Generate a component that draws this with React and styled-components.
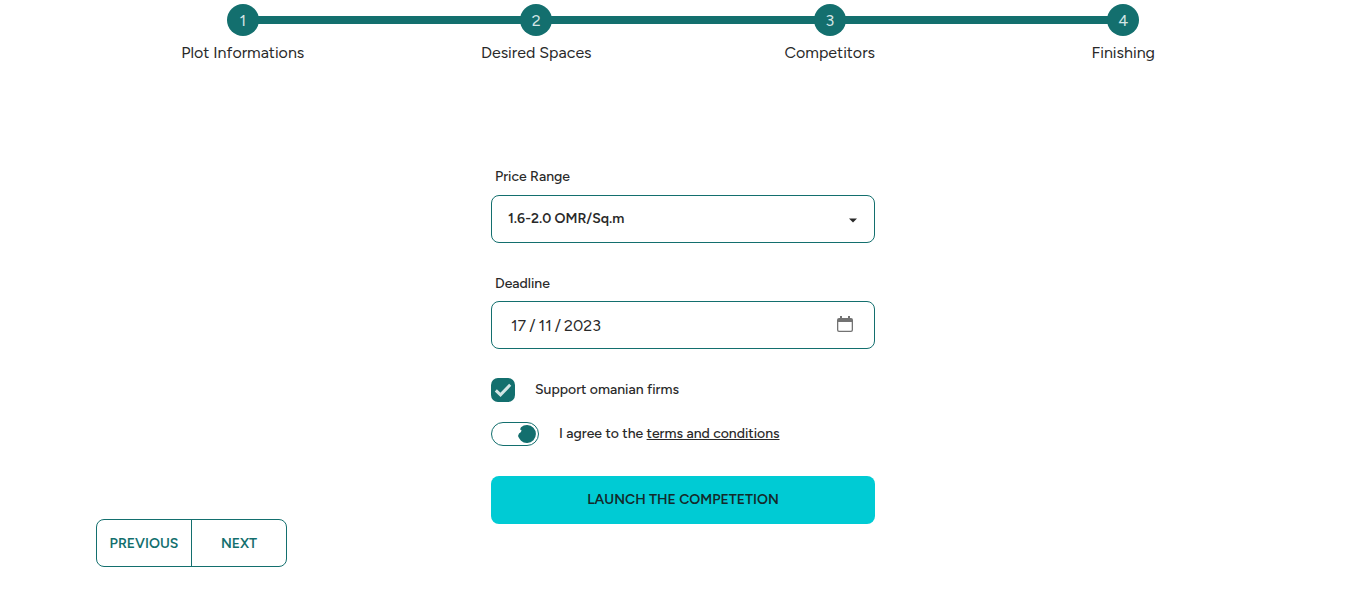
import React from "react";
import styled, { createGlobalStyle } from "styled-components";

const TEAL = "#136f6e";
const INK = "#292929";

const GlobalStyle = createGlobalStyle`
  *, *::before, *::after { box-sizing: border-box; }
  body {
    margin: 0;
    background: #fff;
    color: ${INK};
    font-family: Figtree, Inter, sans-serif;
    -webkit-font-smoothing: antialiased;
    overflow: hidden;
  }
  button { font: inherit; cursor: pointer; }
`;

const Page = styled.main`
  display: flex;
  flex-direction: column;
  height: 615px;
  padding: 0 96px;
`;

const Steps = styled.ol`
  display: grid;
  grid-template-columns: repeat(4, 1fr);
  list-style: none;
  margin: 0;
  padding: 0;
`;

const Step = styled.li`
  display: grid;
  grid-template-rows: 40px 26px;
  justify-items: center;
  align-items: center;
`;

const Track = styled.div`
  display: grid;
  grid-template-columns: 1fr 32px 1fr;
  align-items: center;
  width: 100%;
`;

const Bar = styled.span`
  height: 8px;
  margin: 0 -2px;
  background: ${(p) => (p.$on ? TEAL : "transparent")};
`;

const Dot = styled.span`
  display: grid;
  place-items: center;
  height: 32px;
  border-radius: 50%;
  background: ${TEAL};
  color: #d3e5e5;
  font-size: 16px;
`;

const Text = styled.span`
  font-size: ${(p) => p.$size || 14}px;
  font-weight: ${(p) => p.$weight || 500};
  line-height: 20px;
  white-space: nowrap;
`;

const DateText = styled(Text)`
  margin-top: 2px;
  word-spacing: -0.9px;
`;

const Form = styled.form`
  display: flex;
  flex-direction: column;
  width: 384px;
  margin: 101px auto 0;
`;

const Label = styled.label`
  display: flex;
  padding: 0 4px;
  margin-bottom: ${(p) => p.$gap}px;
`;

const Field = styled.div`
  display: flex;
  align-items: center;
  justify-content: space-between;
  height: 48px;
  padding: ${(p) => p.$pad};
  margin-bottom: ${(p) => p.$gap}px;
  border: 1px solid ${TEAL};
  border-radius: 8px;
`;

const Caret = styled.svg`
  margin-top: 3px;
`;

const CalendarIcon = styled.svg`
  margin-bottom: 2px;
`;

const Option = styled.div`
  display: flex;
  align-items: center;
  gap: 20px;
  height: 24px;
  margin-bottom: 20px;
`;

const Checkbox = styled.span`
  display: grid;
  place-items: center;
  width: 24px;
  height: 24px;
  border-radius: 7px;
  background: ${TEAL};
`;

const Toggle = styled.span`
  display: flex;
  justify-content: flex-end;
  align-items: center;
  width: 48px;
  height: 24px;
  padding-right: 1px;
  border: 1px solid ${TEAL};
  border-radius: 12px;
`;

const Terms = styled.a`
  text-decoration: underline;
`;

const Launch = styled.button`
  height: 48px;
  margin-top: 10px;
  padding: 0 0 2px;
  border: 0;
  border-radius: 8px;
  background: #00cbd4;
  color: #142a2b;
`;

const Pager = styled.nav`
  display: flex;
  flex-shrink: 0;
  align-self: flex-start;
  width: 191px;
  height: 48px;
  margin-top: -5px;
  border: 1px solid ${TEAL};
  border-radius: 8px;
`;

const PageButton = styled.button`
  flex: 1;
  padding: 0;
  border: 0;
  background: none;
  color: ${TEAL};
  & + & { border-left: 1px solid ${TEAL}; }
`;

const steps = ["Plot Informations", "Desired Spaces", "Competitors", "Finishing"];

export default function App() {
  return (
    <>
      <GlobalStyle />
      <Page>
        <Steps>
          {steps.map((name, i) => (
            <Step key={name}>
              <Track>
                <Bar $on={i > 0} />
                <Dot>{i + 1}</Dot>
                <Bar $on={i < steps.length - 1} />
              </Track>
              <Text $size={16} $weight={400}>{name}</Text>
            </Step>
          ))}
        </Steps>
        <Form>
          <Label $gap={8}><Text>Price Range</Text></Label>
          <Field $pad="0 17px 0 16px" $gap={31}>
            <Text $weight={600}>1.6-2.0 OMR/Sq.m</Text>
            <Caret width="8" height="5" viewBox="0 0 8 5"><path d="M0 0.5h8L4 4.5z" fill={INK} /></Caret>
          </Field>
          <Label $gap={7}><Text>Deadline</Text></Label>
          <Field $pad="0 21px 0 19px" $gap={29}>
            <DateText $size={16} $weight={400}>17 / 11 / 2023</DateText>
            <CalendarIcon width="16" height="16" viewBox="0 0 16 16">
              <path fillRule="evenodd" fill="#737373" d="M3 0h2v2h6V0h2v2h1a2 2 0 0 1 2 2v10a2 2 0 0 1-2 2H2a2 2 0 0 1-2-2V4a2 2 0 0 1 2-2h1zM1.3 6v8q0 .8.8.8h11.8q.8 0 .8-.8V6z" />
            </CalendarIcon>
          </Field>
          <Option>
            <Checkbox>
              <svg width="24" height="24" viewBox="0 0 24 24"><path d="M4.8 12.3l4.7 4.5L19.2 6.8" fill="none" stroke="#d3e5e5" strokeWidth="3" /></svg>
            </Checkbox>
            <Text>Support omanian firms</Text>
          </Option>
          <Option>
            <Toggle>
              <svg width="20" height="20" viewBox="0 0 20 20"><path d="M4 3.2A9 9 0 1 1 4 16.8L2 14 1 12 2 9.5 4 8 4.5 6 3 5.5z" fill={TEAL} /></svg>
            </Toggle>
            <Text>I agree to the <Terms>terms and conditions</Terms></Text>
          </Option>
          <Launch type="button"><Text $weight={600}>LAUNCH THE COMPETETION</Text></Launch>
        </Form>
        <Pager>
          <PageButton><Text $weight={600}>PREVIOUS</Text></PageButton>
          <PageButton><Text $weight={600}>NEXT</Text></PageButton>
        </Pager>
      </Page>
    </>
  );
}
